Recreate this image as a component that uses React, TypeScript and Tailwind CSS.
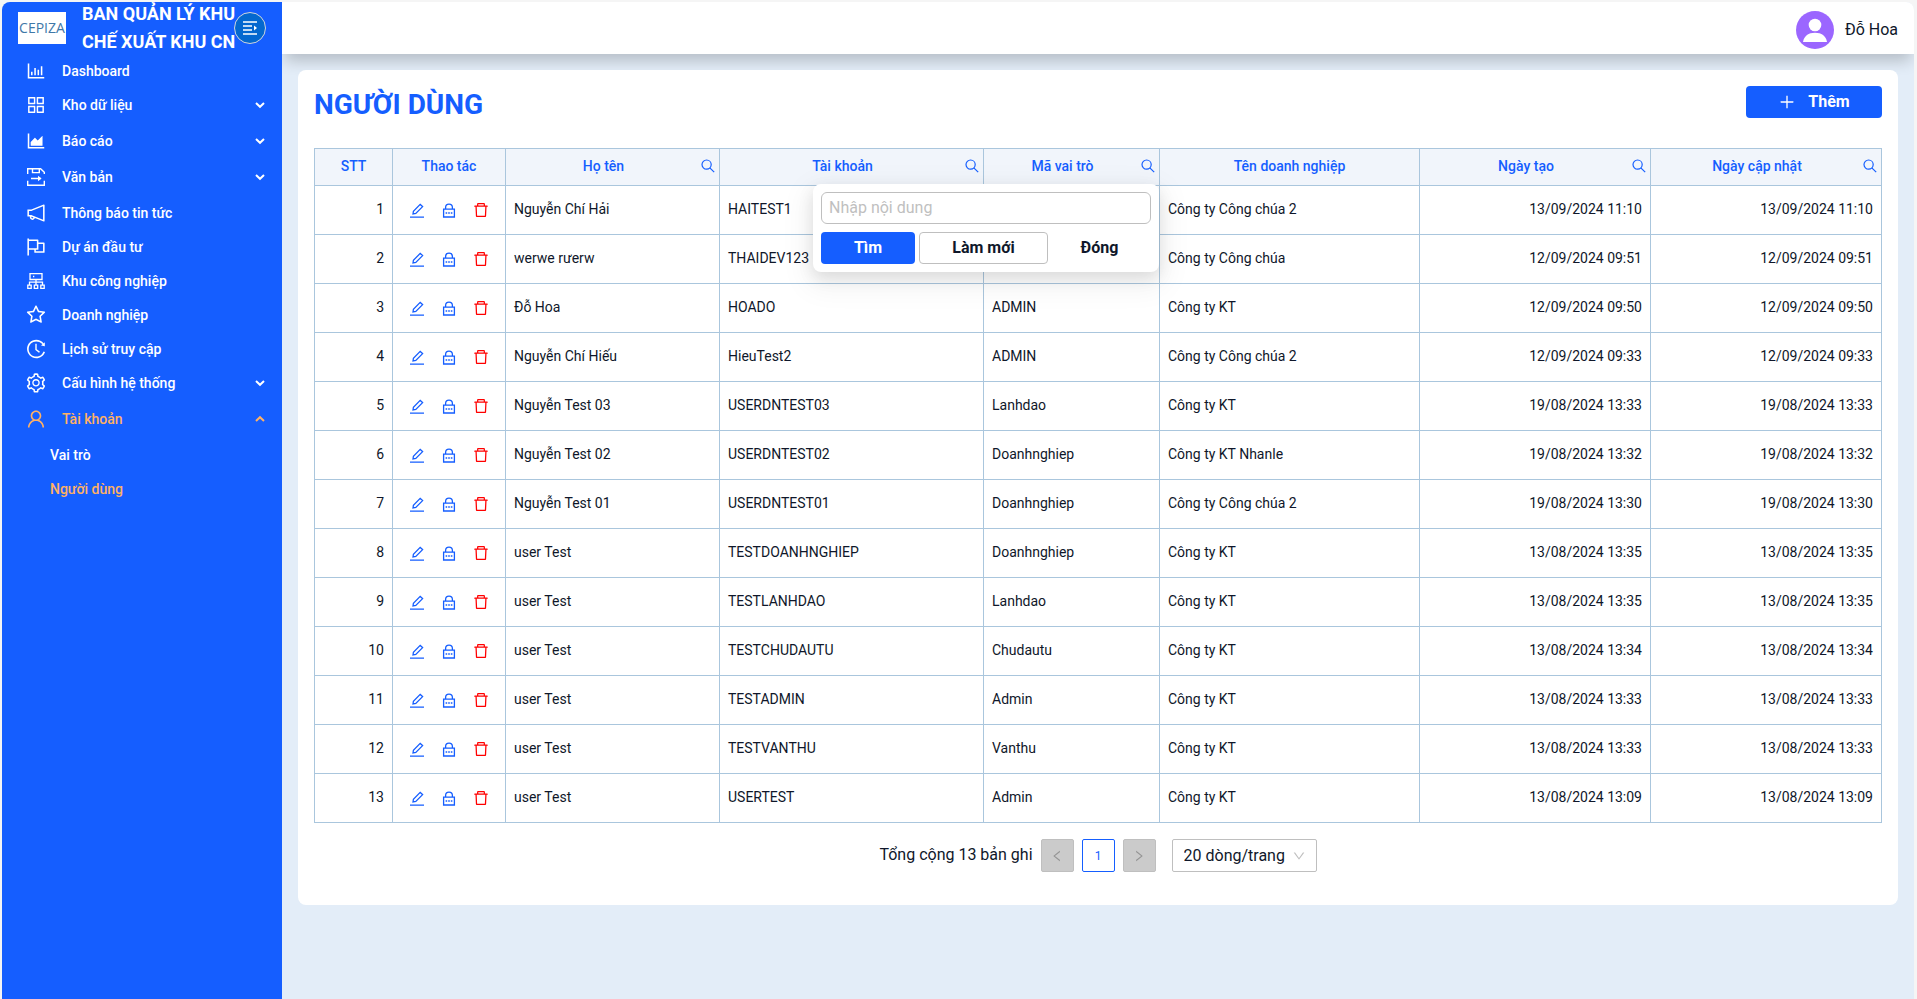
import type { ReactNode } from 'react';
import {
  AiOutlineAppstore,
  AiOutlineAreaChart,
  AiOutlineBarChart,
  AiOutlineDelete,
  AiOutlineDown,
  AiOutlineFlag,
  AiOutlineHistory,
  AiOutlineLeft,
  AiOutlineNotification,
  AiOutlinePlus,
  AiOutlineRight,
  AiOutlineSetting,
  AiOutlineStar,
  AiOutlineUser,
} from 'react-icons/ai';

function DocumentIcon() {
  return (
    <svg viewBox="0 0 18 18" className="size-[18px]" fill="none" stroke="currentColor" strokeWidth="1.4">
      <path d="M0.7 6V0.7H13.6L17.3 4.2V6M0.7 12.8V17.3H17.3V12.8M5.5 0.7V4.6H12.3V0.7M4 10.5H13.5" />
      <path d="M11 7.8L14.6 10.5L11 13.2Z" fill="currentColor" stroke="none" />
    </svg>
  );
}

function ClusterIcon() {
  return (
    <svg viewBox="0 0 18 18" className="size-[18px]" fill="none" stroke="currentColor" strokeWidth="1.3">
      <path d="M3 1.7H15V7.5H3ZM9 7.5V13M2.5 13V10.2H15.5V13M6 4.5H7.3" />
      <path d="M0.8 13.2H4.2V16.4H0.8ZM7.3 13.2H10.7V16.4H7.3ZM13.8 13.2H17.2V16.4H13.8Z" />
    </svg>
  );
}

function ChevronIcon({ up }: { up?: boolean }) {
  return (
    <svg viewBox="0 0 10 10" className="size-2.5" fill="none" stroke="currentColor" strokeWidth="2">
      <path d={up ? 'M1 7L5 3.2L9 7' : 'M1 3L5 6.8L9 3'} />
    </svg>
  );
}

function SearchIcon() {
  return (
    <svg viewBox="0 0 14 14" className="size-3.5" fill="none" stroke="currentColor" strokeWidth="1.2">
      <circle cx="5.6" cy="5.6" r="4.6" />
      <path d="M8.8 8.8L13.2 13.2" />
    </svg>
  );
}

function EditIcon() {
  return (
    <svg viewBox="0 0 14 15" className="h-[15px] w-3.5" fill="none" stroke="currentColor" strokeWidth="1.3">
      <path d="M0 14.2H14M3 11L3.4 8.4L10.2 1.4L12.6 3.6L5.8 10.4Z" />
    </svg>
  );
}

function LockIcon() {
  return (
    <svg viewBox="0 0 14 15" className="h-[15px] w-3.5" fill="none" stroke="currentColor" strokeWidth="1.3">
      <path d="M1.6 6.2H12.4V14H1.6ZM3.6 6V4.6A3.4 3.4 0 0 1 10.4 4.6V6" />
      <path d="M3.6 10H5.2M6.2 10H7.8M8.8 10H10.4" />
    </svg>
  );
}

const menu: { label: string; icon: ReactNode; group?: boolean; open?: boolean }[] = [
  { label: 'Dashboard', icon: <AiOutlineBarChart /> },
  { label: 'Kho dữ liệu', icon: <AiOutlineAppstore />, group: true },
  { label: 'Báo cáo', icon: <AiOutlineAreaChart />, group: true },
  { label: 'Văn bản', icon: <DocumentIcon />, group: true },
  { label: 'Thông báo tin tức', icon: <AiOutlineNotification /> },
  { label: 'Dự án đầu tư', icon: <AiOutlineFlag /> },
  { label: 'Khu công nghiệp', icon: <ClusterIcon /> },
  { label: 'Doanh nghiệp', icon: <AiOutlineStar /> },
  { label: 'Lịch sử truy cập', icon: <AiOutlineHistory /> },
  { label: 'Cấu hình hệ thống', icon: <AiOutlineSetting />, group: true },
  { label: 'Tài khoản', icon: <AiOutlineUser />, group: true, open: true },
];

const columns = [
  { title: 'STT', width: 'w-[78px]' },
  { title: 'Thao tác', width: 'w-[113px]' },
  { title: 'Họ tên', width: 'w-[214px]', search: true },
  { title: 'Tài khoản', width: 'w-[264px]', search: true },
  { title: 'Mã vai trò', width: 'w-[176px]', search: true },
  { title: 'Tên doanh nghiệp', width: 'w-[260px]' },
  { title: 'Ngày tạo', width: 'w-[231px]', search: true },
  { title: 'Ngày cập nhật', width: 'w-[231px]', search: true },
];

const users = [
  { name: 'Nguyễn Chí Hải', account: 'HAITEST1', role: '', company: 'Công ty Công chúa 2', date: '13/09/2024 11:10' },
  { name: 'werwe rưerw', account: 'THAIDEV123', role: '', company: 'Công ty Công chúa', date: '12/09/2024 09:51' },
  { name: 'Đỗ Hoa', account: 'HOADO', role: 'ADMIN', company: 'Công ty KT', date: '12/09/2024 09:50' },
  { name: 'Nguyễn Chí Hiếu', account: 'HieuTest2', role: 'ADMIN', company: 'Công ty Công chúa 2', date: '12/09/2024 09:33' },
  { name: 'Nguyễn Test 03', account: 'USERDNTEST03', role: 'Lanhdao', company: 'Công ty KT', date: '19/08/2024 13:33' },
  { name: 'Nguyễn Test 02', account: 'USERDNTEST02', role: 'Doanhnghiep', company: 'Công ty KT Nhanle', date: '19/08/2024 13:32' },
  { name: 'Nguyễn Test 01', account: 'USERDNTEST01', role: 'Doanhnghiep', company: 'Công ty Công chúa 2', date: '19/08/2024 13:30' },
  { name: 'user Test', account: 'TESTDOANHNGHIEP', role: 'Doanhnghiep', company: 'Công ty KT', date: '13/08/2024 13:35' },
  { name: 'user Test', account: 'TESTLANHDAO', role: 'Lanhdao', company: 'Công ty KT', date: '13/08/2024 13:35' },
  { name: 'user Test', account: 'TESTCHUDAUTU', role: 'Chudautu', company: 'Công ty KT', date: '13/08/2024 13:34' },
  { name: 'user Test', account: 'TESTADMIN', role: 'Admin', company: 'Công ty KT', date: '13/08/2024 13:33' },
  { name: 'user Test', account: 'TESTVANTHU', role: 'Vanthu', company: 'Công ty KT', date: '13/08/2024 13:33' },
  { name: 'user Test', account: 'USERTEST', role: 'Admin', company: 'Công ty KT', date: '13/08/2024 13:09' },
];

function Sidebar() {
  return (
    <aside className="relative w-[280px] shrink-0 bg-[#155eff] text-white">
      <div className="flex h-[52px] items-center pl-4">
        <span className="flex h-8 w-12 shrink-0 items-center justify-center bg-white font-['Open_Sans',sans-serif] text-sm text-[#3f78a8]">
          CEPIZA
        </span>
        <h2 className="ml-4 w-[170px] text-lg leading-7 font-bold">BAN QUẢN LÝ KHU CHẾ XUẤT KHU CN</h2>
      </div>
      <button
        type="button"
        aria-label="Thu gọn menu"
        className="absolute top-[10px] right-4 flex size-8 items-center justify-center rounded-full border border-gray-300 bg-[#0468cf]"
      >
        <svg viewBox="0 0 14 14" className="size-3.5" fill="none" stroke="currentColor" strokeWidth="1.3">
          <path d="M0 1H14M0 5H9M0 9H9M0 13H14" />
          <path d="M11 4.5L14 7L11 9.5Z" fill="currentColor" stroke="none" />
        </svg>
      </button>
      <nav>
        <ul className="text-sm font-medium">
          {menu.map((item) => (
            <li key={item.label}>
              <a
                href="#"
                className={`flex items-center pr-[17px] pl-[23px] ${item.group ? 'h-9 pb-0.5' : 'h-[34px]'} ${item.open ? 'text-[#ffb164]' : ''}`}
              >
                <span className="flex size-[22px] items-center justify-center text-[22px]">{item.icon}</span>
                <span className="ml-[15px] flex-1">{item.label}</span>
                {item.group && <ChevronIcon up={item.open} />}
              </a>
            </li>
          ))}
          <li>
            <a href="#" className="flex h-[34px] items-center pl-12">Vai trò</a>
          </li>
          <li>
            <a href="#" className="flex h-[34px] items-center pl-12 text-[#ffb164]">Người dùng</a>
          </li>
        </ul>
      </nav>
    </aside>
  );
}

function FilterPopup() {
  return (
    <div className="absolute top-[35px] right-[-176px] z-10 w-[346px] rounded-lg bg-white p-2 text-left text-base text-[#0f172a] shadow-[0_6px_16px_rgba(0,0,0,0.1),0_9px_28px_8px_rgba(0,0,0,0.05)]">
      <input
        type="text"
        aria-label="Nhập nội dung"
        placeholder="Nhập nội dung"
        className="h-8 w-full rounded-md border border-[#bfbfbf] px-[7px] pb-0.5 font-normal placeholder:text-[#bfbfbf]"
      />
      <div className="mt-2 flex gap-1 font-bold">
        <button type="button" className="h-8 w-[94px] rounded bg-[#155eff] text-white">Tìm</button>
        <button type="button" className="h-8 w-[129px] rounded border border-[#bfbfbf]">Làm mới</button>
        <button type="button" className="h-8 w-[95px]">Đóng</button>
      </div>
    </div>
  );
}

function UserTable() {
  return (
    <table className="w-full table-fixed border-collapse text-sm">
      <thead>
        <tr className="h-[37px] bg-[#f1f5fb] text-[#155eff]">
          {columns.map((col) => (
            <th key={col.title} className={`border border-[#aac6dd] p-0 font-medium ${col.width}`}>
              <div className="relative flex h-9 items-center pr-1 pb-0.5">
                <span className={`flex-1 text-center ${col.search ? '' : 'pl-1'}`}>{col.title}</span>
                {col.search && (
                  <button type="button" aria-label={`Tìm theo ${col.title}`}>
                    <SearchIcon />
                  </button>
                )}
                {col.title === 'Tài khoản' && <FilterPopup />}
              </div>
            </th>
          ))}
        </tr>
      </thead>
      <tbody>
        {users.map((user, i) => (
          <tr key={user.account} className="h-[49px] [&>td]:border [&>td]:border-[#aac6dd] [&>td]:px-2 [&>td]:pb-0.5">
            <td className="text-right">{i + 1}</td>
            <td>
              <div className="flex items-center justify-center gap-[18px] pt-0.5 text-[#155eff]">
                <button type="button" aria-label="Sửa">
                  <EditIcon />
                </button>
                <button type="button" aria-label="Khóa">
                  <LockIcon />
                </button>
                <button type="button" aria-label="Xóa" className="-mx-0.5 text-lg text-[#ff0000]">
                  <AiOutlineDelete />
                </button>
              </div>
            </td>
            <td>{user.name}</td>
            <td>{user.account}</td>
            <td>{user.role}</td>
            <td>{user.company}</td>
            <td className="text-right">{user.date}</td>
            <td className="text-right">{user.date}</td>
          </tr>
        ))}
      </tbody>
    </table>
  );
}

function Pagination() {
  return (
    <div className="mt-4 flex items-center justify-center">
      <span className="mr-2 pb-0.5">Tổng cộng 13 bản ghi</span>
      <div className="flex gap-2">
        <button type="button" disabled aria-label="Trang trước" className="flex size-[33px] items-center justify-center rounded-xs border border-[#bfbfbf] bg-[#cbcbcb] text-sm text-[#949494]">
          <AiOutlineLeft />
        </button>
        <button type="button" className="size-[33px] rounded-xs border border-[#155eff] text-xs text-[#155eff]">1</button>
        <button type="button" disabled aria-label="Trang sau" className="flex size-[33px] items-center justify-center rounded-xs border border-[#bfbfbf] bg-[#cbcbcb] text-sm text-[#949494]">
          <AiOutlineRight />
        </button>
      </div>
      <div className="relative ml-4 flex items-center">
        <select aria-label="Số dòng mỗi trang" className="h-[33px] w-[145px] appearance-none rounded-xs border border-[#bfbfbf] bg-white pl-[11px]">
          <option>20 dòng/trang</option>
        </select>
        <AiOutlineDown className="pointer-events-none absolute right-[11px] text-sm text-[#bfbfbf]" />
      </div>
    </div>
  );
}

export default function App() {
  return (
    <div className="min-h-screen bg-[#f5f5f5] pt-0.5 pr-[3px] pl-0.5 font-[Roboto,sans-serif] text-base text-[#0f172a]">
      <div className="flex min-h-[calc(100vh-2px)] overflow-hidden rounded-t-lg bg-[#e3edf8]">
        <Sidebar />
        <div className="min-w-0 flex-1">
          <header className="flex h-[52px] items-center justify-end gap-[11px] bg-white pt-1 pr-4 shadow-[0_10px_15px_-3px_rgba(0,0,0,0.2)]">
            <svg viewBox="0 0 38 38" className="size-[38px]">
              <circle cx="19" cy="19" r="19" fill="#9b66ff" />
              <circle cx="19" cy="14" r="6.3" fill="white" />
              <path d="M7 31C8 25 12.5 21.8 19 21.8S30 25 31 31Z" fill="white" />
            </svg>
            <span>Đỗ Hoa</span>
          </header>
          <main className="relative m-4 rounded-lg bg-white p-4 pb-[33px]">
            <div className="mb-6 flex items-start justify-between">
              <h1 className="text-[28px] leading-[38px] font-bold text-[#155eff]">NGƯỜI DÙNG</h1>
              <button type="button" className="flex h-8 w-[136px] items-center justify-center gap-3 rounded bg-[#155eff] font-bold text-white">
                <AiOutlinePlus className="text-lg" />
                Thêm
              </button>
            </div>
            <UserTable />
            <Pagination />
          </main>
        </div>
      </div>
    </div>
  );
}
